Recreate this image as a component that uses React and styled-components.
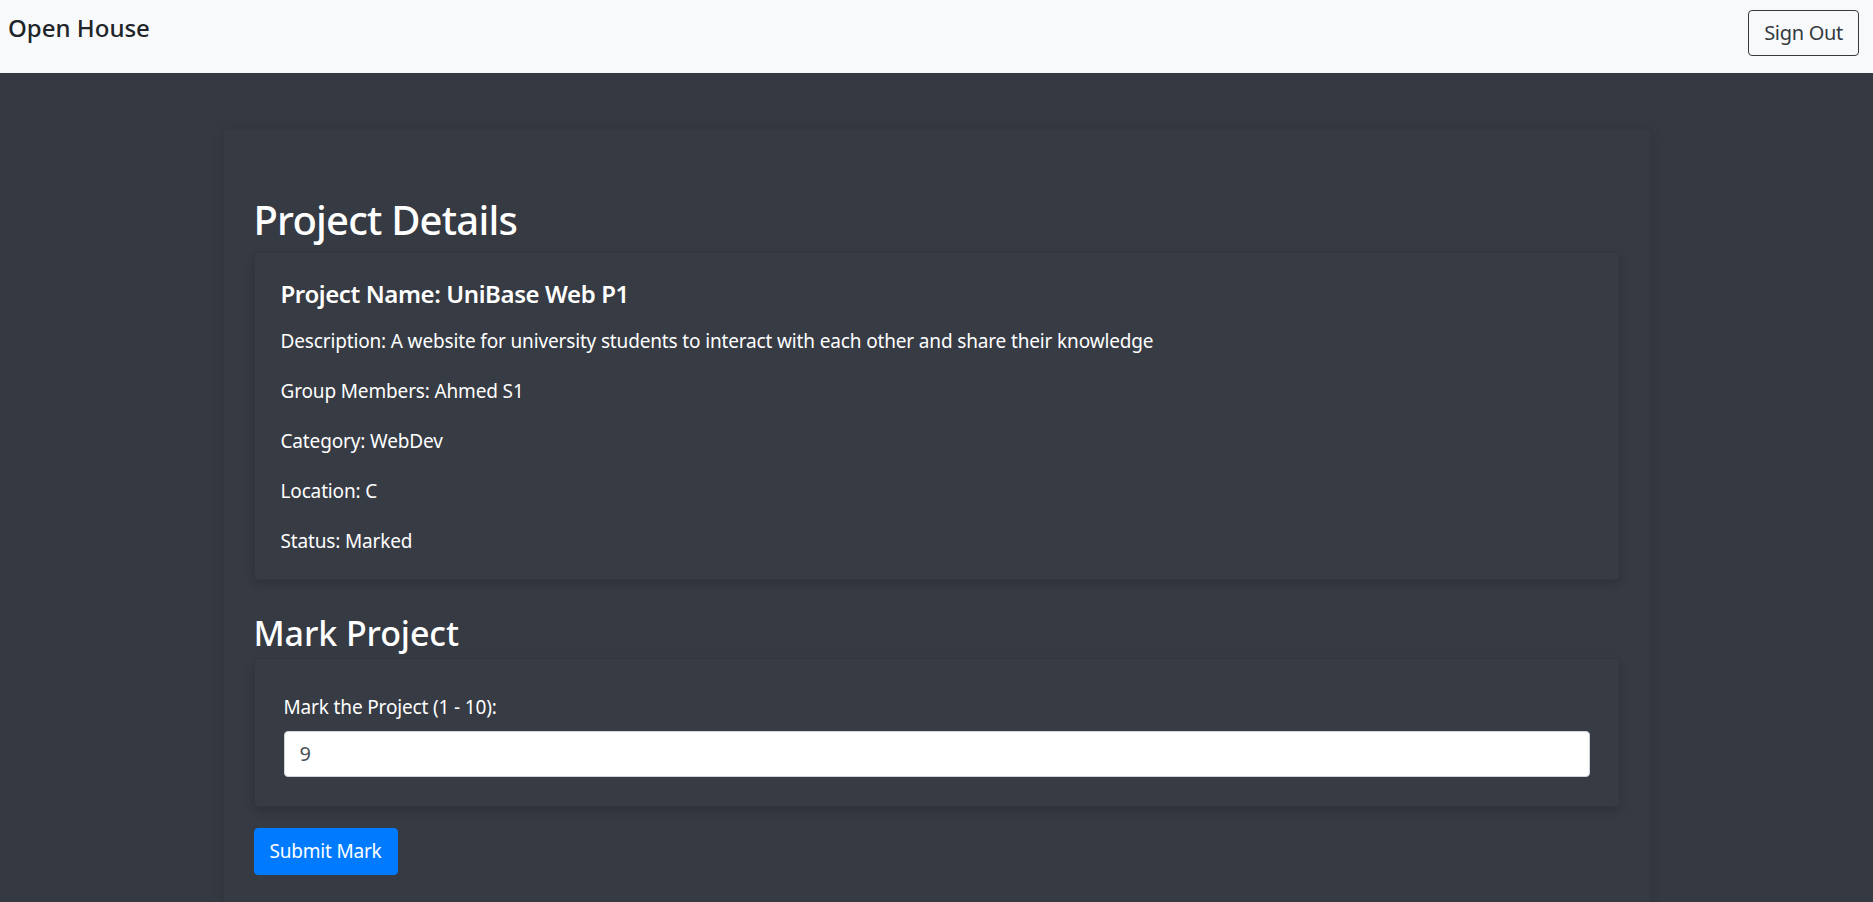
import styled, { createGlobalStyle } from "styled-components";

const GlobalStyle = createGlobalStyle`
  body {
    margin: 0;
    background: #353a42;
    font-family: "Noto Sans", "Open Sans", sans-serif;
    color: #ffffff;
  }
  * {
    box-sizing: border-box;
  }
`;

export default function App() {
  return (
    <>
      <GlobalStyle />
      <NavBar>
        <Brand>Open House</Brand>
        <SignOutButton>Sign Out</SignOutButton>
      </NavBar>
      <Container>
        <PageTitle>Project Details</PageTitle>
        <Card $pad="27px 26px 3px">
          <ProjectName>Project Name: UniBase Web P1</ProjectName>
          <Detail>
            Description: A website for university students to interact with
            each other and share their knowledge
          </Detail>
          <Detail>Group Members: Ahmed S1</Detail>
          <Detail>Category: WebDev</Detail>
          <Detail>Location: C</Detail>
          <Detail>Status: Marked</Detail>
        </Card>
        <SectionTitle>Mark Project</SectionTitle>
        <Card $pad="33px 29px 29px">
          <Label htmlFor="mark">Mark the Project (1 - 10):</Label>
          <MarkInput id="mark" type="number" defaultValue="9" />
        </Card>
        <SubmitButton>Submit Mark</SubmitButton>
      </Container>
    </>
  );
}

const NavBar = styled.nav`
  height: 73px;
  display: flex;
  align-items: flex-start;
  justify-content: space-between;
  padding: 10px 14px 0 8px;
  background: #f8f9fa;
`;

const Brand = styled.div`
  font-size: 24px;
  line-height: 1.5;
  font-weight: 500;
  color: #212529;
`;

const SignOutButton = styled.button`
  font-family: inherit;
  font-size: 20px;
  line-height: 1.5;
  letter-spacing: -0.3px;
  padding: 7px 15px;
  color: #343a40;
  background: transparent;
  border: 1px solid #343a40;
  border-radius: 4px;
  cursor: pointer;
`;

const Container = styled.main`
  width: 1426px;
  margin: 57px auto 0;
  padding: 66px 30px 40px;
  background: #363a43;
  border-radius: 4px;
  box-shadow: 0 0 14px rgba(0, 0, 0, 0.12);
`;

const PageTitle = styled.h1`
  margin: 0 0 8px;
  font-size: 40px;
  line-height: 48px;
  letter-spacing: -0.8px;
  font-weight: 500;
`;

const SectionTitle = styled.h2`
  margin: 33px 0 4px;
  font-size: 34px;
  line-height: 1.2;
  letter-spacing: -0.1px;
  font-weight: 500;
`;

const Card = styled.section`
  display: flex;
  flex-direction: column;
  padding: ${p => p.$pad};
  background: #373b44;
  border: 1px solid rgba(0, 0, 0, 0.08);
  border-radius: 4px;
  box-shadow: 0 4px 10px rgba(0, 0, 0, 0.16);
`;

const ProjectName = styled.h4`
  margin: 0 0 17px;
  font-size: 24px;
  line-height: 1.2;
  letter-spacing: -0.4px;
  font-weight: 600;
`;

const Detail = styled.p`
  margin: 0 0 20px;
  font-size: 19px;
  line-height: 30px;
  letter-spacing: -0.15px;
`;

const Label = styled.label`
  margin-bottom: 9px;
  font-size: 19px;
  line-height: 30px;
  letter-spacing: -0.15px;
`;

const MarkInput = styled.input`
  height: 46px;
  padding: 0 15px;
  font-family: inherit;
  font-size: 20px;
  color: #495057;
  background: #ffffff;
  border: 1px solid #ced4da;
  border-radius: 4px;
  outline: none;
  appearance: textfield;
  &::-webkit-inner-spin-button,
  &::-webkit-outer-spin-button {
    -webkit-appearance: none;
    margin: 0;
  }
`;

const SubmitButton = styled.button`
  margin-top: 21px;
  align-self: flex-start;
  height: 47px;
  padding: 0 15px;
  font-family: inherit;
  font-size: 19px;
  letter-spacing: -0.2px;
  color: #ffffff;
  background: #007bff;
  border: 1px solid #007bff;
  border-radius: 4px;
  cursor: pointer;
`;
